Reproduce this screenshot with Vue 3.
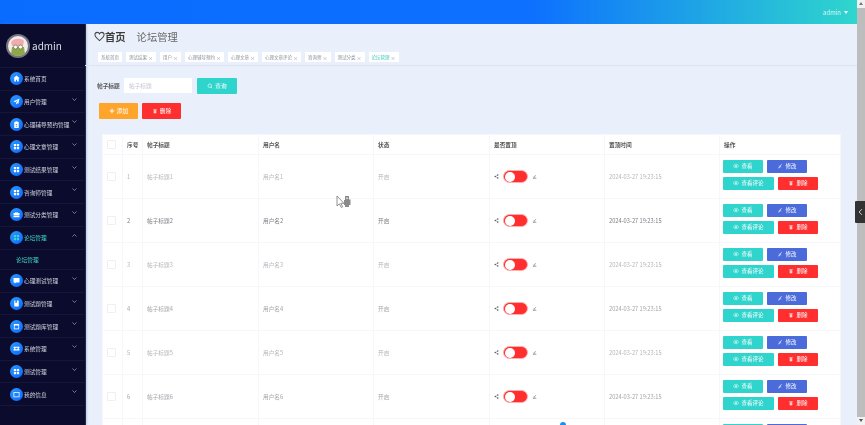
<script setup>
const icons = {
  home: 'M12 4 3.500 11.500H6V20h4.500v-5h3v5H18v-8.500h2.500z',
  plane: 'M20 4 4 11.500l5 2.300L17 7l-6 8v5l3-3.500 3 1.500z',
  clip: 'M9 3h6v2h3v16H6V5h3zm1 8v2h4v-2zm0 4v2h4v-2z',
  grid: 'M5 5h6v6H5zm8 0h6v6h-6zM5 13h6v6H5zm8 0h6v6h-6z',
  bag: 'M9 5h6v3h5v11H4V8h5zm1.500 1.500V8h3V6.500zM4 13h16v1.500H4z',
  msg: 'M4 5h16v12h-9l-4 3v-3H4z',
  book: 'M6 4h12v16H6zm3 0v7l2-1.500L13 11V4z',
  card: 'M5 5h14v14H5zm2 4v8h10V9z',
  ticket: 'M4 7h16v3a2 2 0 0 0 0 4v3H4v-3a2 2 0 0 0 0-4zm5 3v4h6v-4z',
  screen: 'M4 5h16v14H4zm2 2v10h12V7z'
}
const menu = [
  { label: '系统首页', icon: 'home', noArrow: true },
  { label: '用户管理', icon: 'plane' },
  { label: '心理辅导预约管理', icon: 'clip' },
  { label: '心理文章管理', icon: 'grid' },
  { label: '测试结果管理', icon: 'grid' },
  { label: '咨询师管理', icon: 'grid' },
  { label: '测试分类管理', icon: 'bag' },
  { label: '论坛管理', icon: 'grid', active: true },
  { label: '心理测试管理', icon: 'msg' },
  { label: '测试题管理', icon: 'book' },
  { label: '测试题库管理', icon: 'card' },
  { label: '系统管理', icon: 'ticket' },
  { label: '测试管理', icon: 'grid' },
  { label: '我的信息', icon: 'screen' }
]
const tags = [
  { t: '系统首页' }, { t: '测试结果', x: 1 }, { t: '用户', x: 1 }, { t: '心理辅导预约', x: 1 },
  { t: '心理文章', x: 1 }, { t: '心理文章评论', x: 1 }, { t: '咨询师', x: 1 }, { t: '测试分类', x: 1 },
  { t: '论坛管理', x: 1, on: 1 }
]
const rows = [
  { n: 1, tone: 'pale' }, { n: 2, tone: 'dark' }, { n: 3, tone: 'pale' },
  { n: 4, tone: 'mid' }, { n: 5, tone: 'pale' }, { n: 6, tone: 'mid' }
]
</script>

<template>
  <div class="page">
    <div class="content">
      <header class="topbar"><span class="user">admin</span><i class="caret"></i></header>
      <div class="body">
        <aside class="side">
          <div class="brand">
            <svg class="avatar" viewBox="0 0 24 24">
              <circle cx="12" cy="12" r="12" fill="#77757f" />
              <circle cx="12" cy="12" r="10" fill="#f4ece8" />
              <path d="M5 8c3-4 10-4 13-1l-1 5H6z" fill="#f2a9b0" />
              <path d="M6 13h12l1 7c-4 2.500-10 2.500-14 0z" fill="#8fa64c" />
              <circle cx="9.500" cy="13" r="2" fill="#fff" stroke="#556b2f" stroke-width=".6" />
              <circle cx="14.500" cy="13" r="2" fill="#fff" stroke="#556b2f" stroke-width=".6" />
            </svg>
            <span>admin</span>
          </div>
          <template v-for="m in menu" :key="m.label">
            <div class="item" :class="{ active: m.active }">
              <span class="dot"><svg viewBox="0 0 24 24"><path :d="icons[m.icon]" :fill="m.active ? '#3fd6c8' : '#fff'" fill-rule="evenodd" /></svg></span>
              <span class="label">{{ m.label }}</span>
              <svg v-if="!m.noArrow" class="arrow" viewBox="0 0 10 6"><path :d="m.active ? 'M1 5l4-4 4 4' : 'M1 1l4 4 4-4'" fill="none" stroke="#aeb3c6" stroke-width="1.300" /></svg>
            </div>
            <div v-if="m.active" class="subitem">论坛管理</div>
          </template>
        </aside>
        <main class="main">
          <div class="crumbs">
            <svg class="heart" viewBox="0 0 24 24"><path d="M12 21C6 16 2 12.500 2 8.300 2 5 4.500 3 7.200 3 9 3 11 4 12 6c1-2 3-3 4.800-3C19.500 3 22 5 22 8.300 22 12.500 18 16 12 21z" fill="none" stroke="#444" stroke-width="2.200" /></svg>
            <b>首页</b><span class="sep"></span><span class="now">论坛管理</span>
          </div>
          <div class="tags">
            <span v-for="t in tags" :key="t.t" class="tag" :class="{ on: t.on }">{{ t.t }}<em v-if="t.x">×</em></span>
          </div>
          <div class="search">
            <label>帖子标题</label>
            <div class="input">帖子标题</div>
            <button class="btn teal find">
              <svg viewBox="0 0 24 24"><circle cx="11" cy="11" r="7" fill="none" stroke="#fff" stroke-width="2.500" /><path d="M16 16l5 5" stroke="#fff" stroke-width="2.500" /></svg>查询
            </button>
          </div>
          <div class="actions">
            <button class="btn orange big"><svg viewBox="0 0 24 24"><path d="M10 3h4v7h7v4h-7v7h-4v-7H3v-4h7z" fill="#fff" /></svg>添加</button>
            <button class="btn red big"><svg viewBox="0 0 24 24"><path d="M5 5h14v2H5zm2 4h10v12H7zm3 2v8h1v-8zm3 0v8h1v-8z" fill="#fff" fill-rule="evenodd" /></svg>删除</button>
          </div>
          <table class="grid">
            <colgroup>
              <col style="width:20px" /><col style="width:20px" /><col style="width:116px" /><col style="width:115px" />
              <col style="width:116px" /><col style="width:115px" /><col style="width:115px" /><col style="width:121px" />
            </colgroup>
            <thead>
              <tr>
                <th class="c"><i class="check"></i></th><th>序号</th><th>帖子标题</th><th>用户名</th>
                <th>状态</th><th>是否置顶</th><th>置顶时间</th><th>操作</th>
              </tr>
            </thead>
            <tbody>
              <tr v-for="r in rows" :key="r.n" :class="r.tone">
                <td class="c"><i class="check"></i></td>
                <td>{{ r.n }}</td>
                <td>帖子标题{{ r.n }}</td>
                <td>用户名{{ r.n }}</td>
                <td>开启</td>
                <td>
                  <div class="toggle">
                    <svg viewBox="0 0 24 24"><circle cx="6" cy="12" r="3.500" fill="#555" /><circle cx="18" cy="5" r="3.500" fill="#555" /><circle cx="18" cy="19" r="3.500" fill="#555" /><path d="M6 12 18 5M6 12l12 7" stroke="#555" stroke-width="2" /></svg>
                    <span class="switch"><i></i></span>
                    <svg viewBox="0 0 24 24"><path d="M5 20c8 0 6-8 13-15M9 11l6 6M4 21h17" fill="none" stroke="#666" stroke-width="2.500" /></svg>
                  </div>
                </td>
                <td>2024-03-27 19:23:15</td>
                <td>
                  <div class="ops">
                    <button class="btn teal w40"><svg viewBox="0 0 24 24"><path d="M1 12c6-9 16-9 22 0-6 9-16 9-22 0z" fill="none" stroke="#fff" stroke-width="2" /><circle cx="12" cy="12" r="3.500" fill="#fff" /></svg>查看</button>
                    <button class="btn blue w40"><svg viewBox="0 0 24 24"><path d="M5 20c8 0 6-8 13-15M9 11l6 6" fill="none" stroke="#fff" stroke-width="3" /></svg>修改</button>
                    <button class="btn teal w51"><svg viewBox="0 0 24 24"><path d="M1 12c6-9 16-9 22 0-6 9-16 9-22 0z" fill="none" stroke="#fff" stroke-width="2" /><circle cx="12" cy="12" r="3.500" fill="#fff" /></svg>查看评论</button>
                    <button class="btn red w40"><svg viewBox="0 0 24 24"><path d="M5 5h14v2H5zm2 4h10v12H7zm3 2v8h1v-8zm3 0v8h1v-8z" fill="#fff" fill-rule="evenodd" /></svg>删除</button>
                  </div>
                </td>
              </tr>
              <tr class="pale stub">
                <td class="c"></td><td></td><td></td><td></td><td></td><td></td><td></td>
                <td><div class="ops"><i class="btn teal w40"></i><i class="btn blue w40"></i></div></td>
              </tr>
            </tbody>
          </table>
        </main>
      </div>
    </div>
    <div class="scrollbar">
      <i class="up"></i>
      <div class="thumb"></div>
      <i class="down"></i>
    </div>
    <div class="handle"><svg viewBox="0 0 10 14"><path d="M7 3 3 7l4 4" fill="none" stroke="#ddd" stroke-width="1.300" /></svg></div>
    <svg class="cursor" viewBox="0 0 16 14">
      <path d="M1 1v10l2.300-2.200 2 3.700 1.400-.7-2-3.500H8z" fill="#fff" stroke="#777" stroke-width=".8" />
      <path d="M9 1h4v3.500h1.500V10H13v2H9v-2H8V5h1z" fill="#8a8a8a" />
      <path d="M10 2.500h2V4h-2z" fill="#d8d8d8" />
    </svg>
    <i class="pin"></i>
  </div>
</template>

<style>
html, body { margin: 0; background: #e9f0fb; overflow: hidden; }
</style>

<style scoped>
.page {
  position: relative;
  display: flex;
  width: 865px;
  height: 425px;
  overflow: hidden;
  font-family: "Noto Sans CJK SC", "Noto Sans", sans-serif;
  background: #e9f0fb;
  filter: blur(0.6px);
}
.content { flex: 1; min-width: 0; display: flex; flex-direction: column; }
.topbar {
  height: 24px;
  flex: none;
  display: flex;
  align-items: center;
  justify-content: flex-end;
  gap: 3px;
  padding-right: 9px;
  background: linear-gradient(90deg, #0a6cff 0%, #0d70ff 62%, #2fd6cd 100%);
  color: #d9f5f3;
  font-size: 6px;
}
.caret { width: 0; height: 0; border: 2px solid transparent; border-top: 3px solid #fff; border-bottom: 0; }
.body { flex: 1; display: flex; min-height: 0; }
.side {
  width: 85px;
  flex: none;
  background: #0b0c2d;
  box-shadow: 1px 0 0 #1f2a48, 2px 0 2px rgba(120,130,170,.35);
  color: #cfd2dc;
  font-size: 5.7px;
}
.brand { height: 44px; display: flex; align-items: center; gap: 2px; padding-left: 6px; color: #dcdde4; font-size: 10px; box-sizing: border-box; border-bottom: 1px solid #15173a; }
.avatar { width: 24px; height: 24px; }
.item { position: relative; height: 22.700px; box-sizing: border-box; display: flex; align-items: center; padding-left: 10px; gap: 1px; border-bottom: 1px solid #14163a; }
.dot { width: 13px; height: 13px; border-radius: 50%; background: linear-gradient(135deg, #2a9cff, #0a66ff); display: flex; align-items: center; justify-content: center; flex: none; }
.dot svg { width: 9px; height: 9px; }
.arrow { position: absolute; left: 72px; top: 7px; width: 5px; height: 3px; }
.item.active .label { color: #3fd6c8; }
.subitem { height: 20.500px; line-height: 19.500px; padding-left: 16px; color: #3fd6c8; border-bottom: 1px solid #14163a; box-sizing: border-box; }
.main { flex: 1; min-width: 0; }
.crumbs { height: 26px; display: flex; align-items: center; padding-left: 9px; font-size: 10.300px; color: #444; margin-top: -0.500px; }
.crumbs b { font-weight: 700; color: #3d3d3d; }
.heart { width: 11px; height: 11px; }
.sep { width: 11px; }
.now { color: #666; }
.tags { height: 15.500px; display: flex; align-items: center; gap: 4px; padding-left: 13px; border-bottom: 1.500px solid #dde4f0; box-sizing: content-box; }
.tag { height: 10px; padding: 0 3px; display: flex; align-items: center; background: #fff; color: #8a8f99; font-size: 4.500px; white-space: nowrap; }
.tag em { font-style: normal; margin-left: 1px; font-size: 5px; color: #999; }
.tag.on { color: #3cc9c0; }
.search { display: flex; align-items: center; height: 16px; margin-top: 11.500px; padding-left: 12px; font-size: 5.700px; }
.search label { font-weight: 700; color: #555; width: 27px; }
.input { width: 68px; height: 15px; background: #fff; color: #c4c6cc; line-height: 15px; padding-left: 5px; box-sizing: border-box; margin-right: 5px; }
.btn { border: 0; padding: 0; color: #fff; font: inherit; display: inline-flex; align-items: center; justify-content: center; gap: 2px; border-radius: 1px; }
.btn svg { width: 6px; height: 6px; }
.find { width: 40px; height: 16px; font-size: 5.700px; }
.actions { display: flex; gap: 4px; margin-top: 9px; padding-left: 14px; }
.big { width: 39px; height: 16px; font-size: 5.700px; }
.teal { background: #2fd4cc; }
.orange { background: #ffa52c; }
.red { background: #ff2f2f; }
.blue { background: #4b6bdb; }
.grid { table-layout: fixed; width: 738px; margin: 15px 0 0 17px; border-collapse: collapse; background: #fff; font-size: 5.700px; }
.grid th, .grid td { padding: 0 0 0 4px; text-align: left; border: 1px solid #f6f7fa; }
.grid th { height: 19.500px; color: #555; font-weight: 700; }
.grid td { height: 44px; box-sizing: border-box; }
.check { display: block; width: 7px; height: 7px; border: 1px solid #eeeff3; border-radius: 1px; }
tr.pale td { color: #b4b6bb; }
tr.mid td { color: #a3a5aa; }
tr.dark td { color: #7c7e84; }
.toggle { display: flex; align-items: center; gap: 4px; }
.toggle svg { width: 5px; height: 5px; }
.switch { display: block; width: 25px; height: 13px; box-sizing: border-box; background: #ff2f2f; border: 1px solid #ffb0ad; border-radius: 7px; position: relative; }
.switch i { position: absolute; left: .5px; top: .5px; width: 10px; height: 10px; background: #fff; border-radius: 50%; }
.ops { display: flex; flex-wrap: wrap; align-content: center; gap: 4px; margin: 0 0 4px -1px; width: 100px; }
.ops .btn { height: 13px; font-size: 5.500px; }
.stub td { vertical-align: top; }
.stub .ops { margin: 5px 0 0 -1px; }
.w40 { width: 40px; }
.w51 { width: 51px; }
.scrollbar { width: 8px; flex: none; background: #c2c2c2; display: flex; flex-direction: column; position: relative; }
.thumb { flex: 1; background: #bdbdbd; }
.up, .down { height: 8px; background: #f1f1f1; position: relative; display: block; }
.up::after, .down::after { content: ""; position: absolute; left: 2px; top: 2px; border: 2px solid transparent; }
.up::after { border-bottom: 3px solid #777; border-top: 0; }
.down::after { border-top: 3px solid #555; border-bottom: 0; }
.handle { position: absolute; left: 855px; top: 201px; width: 10px; height: 22px; background: #333; border-radius: 1px 0 0 1px; display: flex; align-items: center; justify-content: center; }
.handle svg { width: 7px; height: 10px; }
.cursor { position: absolute; left: 336px; top: 195px; width: 16px; height: 14px; }
.pin { position: absolute; left: 560px; top: 422px; width: 6px; height: 6px; border-radius: 50%; background: #1f8ef0; }
</style>
